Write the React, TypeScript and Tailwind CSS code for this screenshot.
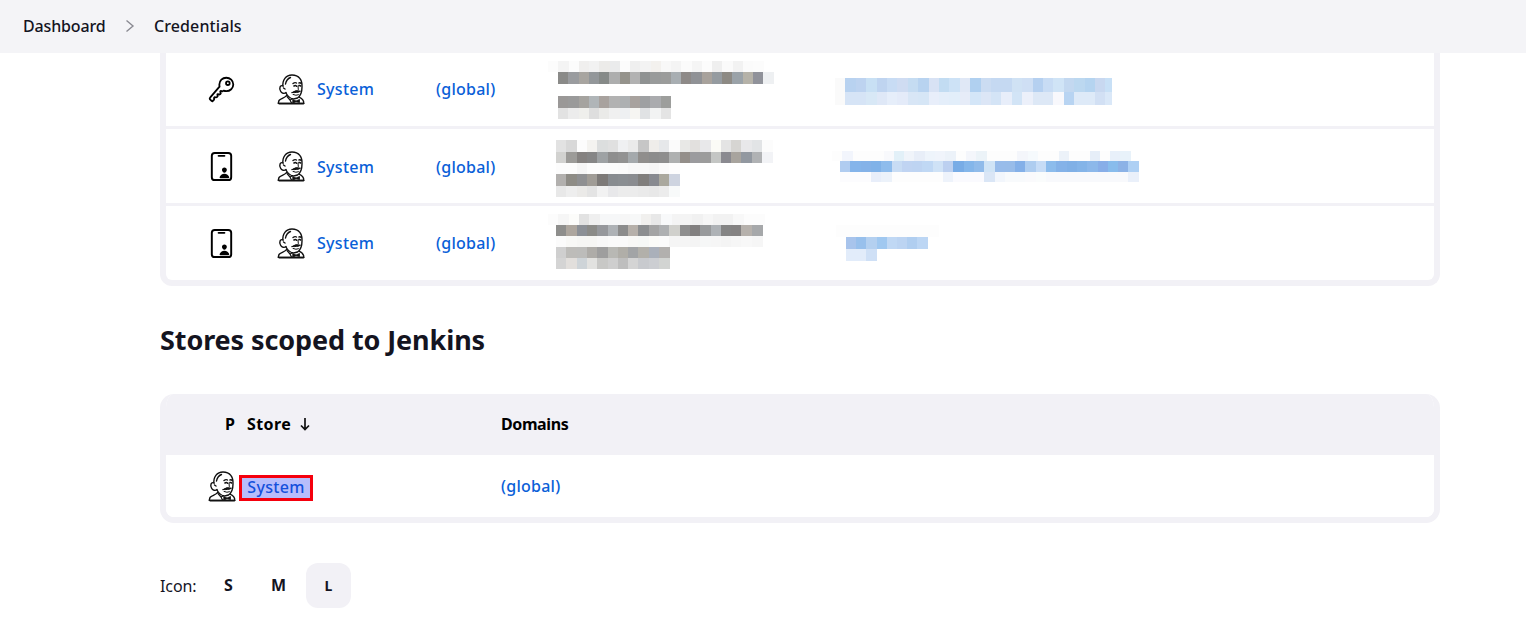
import type { ReactNode } from "react";
import { IoKeyOutline, IoIdCardOutline } from "react-icons/io5";

const font = { fontFamily: '"Noto Sans", sans-serif' };

type Band = { x: number; y: number; w: number; h: number; c: string[] };

function Mosaic({ width, height, bands }: { width: number; height: number; bands: Band[] }) {
  return (
    <svg width={width} height={height} viewBox={`0 0 ${width} ${height}`} shapeRendering="crispEdges" className="block shrink-0">
      {bands.map((b, i) =>
        b.c.map((c, j) => <rect key={`${i}-${j}`} x={b.x + j * b.w} y={b.y} width={b.w + 0.5} height={b.h} fill={c} />)
      )}
    </svg>
  );
}

function Jenkins() {
  return (
    <svg width="28" height="31" viewBox="0 0 28 31" fill="none" stroke="#111" strokeWidth="1.4" strokeLinecap="round" strokeLinejoin="round" className="shrink-0">
      <path d="M9.500 21.500C8 24 3.500 24.500 2 26.500L1.200 29.400H26.800C26.800 26.500 25.600 24.500 22 23.200" fill="#fff" />
      <path d="M6 13C5 6 9 1 15 1C22 1 25.500 6 25 13C25 18 23.500 22 20.500 24C17 25.500 12 25 9 19" fill="#fff" />
      <path d="M6 12C3 10.500 2 14.500 3.500 17C4.500 19.500 7.500 20 9 18.500" fill="#fff" />
      <path d="M8.500 10C9 7 11 4.500 13.500 3.500M6.500 14l1.500 1" />
      <path d="M16 9.500q2-1.500 3.500-.5M22 9q1.500-.5 2.200 .5" />
      <path d="M17 12q1.500-1 2.600 .2M22 11.600q1-.4 1.600 .4" strokeWidth="1.600" />
      <path d="M21 12l.3 3.500" strokeWidth="1" />
      <path d="M15 18.500q3.500-3 8.500-1.300q-2 1.300-4 1.200q-2 .4-4.500 .1z" fill="#111" strokeWidth="1" />
      <path d="M16 20.500q3 1.500 5.500 .3" strokeWidth="1" />
      <path d="M10 22.500L13 26L15.500 24.800M13 26L14.500 29" strokeWidth="1.200" />
      <path d="M16 25.500l3 1.500l3.500-1.500v3l-3.500-.8l-3 1.300z" fill="#111" strokeWidth="0.8" />
      <path d="M2 29.600H26.600" strokeWidth="1.600" />
    </svg>
  );
}

function Row({ icon, name, desc, last, h }: { icon: ReactNode; name: ReactNode; desc: ReactNode; last?: boolean; h: string }) {
  return (
    <div className={`flex items-center ${h} ${last ? "" : "border-b-[3px] border-[#f2f1f6]"}`}>
      <div className="w-[110px] flex justify-center text-black">{icon}</div>
      <div className="w-[40px] ml-[1px]"><Jenkins /></div>
      <a className="w-[119px] text-[#0960d8] font-medium tracking-[0.3px]">System</a>
      <a className="w-[112px] text-[#0960d8] font-medium tracking-[0.25px]">(global)</a>
      <div className="w-[284px]">{name}</div>
      <div>{desc}</div>
    </div>
  );
}

export default function App() {
  return (
    <div style={font} className="h-[623px] w-full overflow-hidden bg-white text-[16px] text-[#14141f]">
      <header className="h-[53px] flex items-center pl-[23px] pb-[2px] bg-[#f4f4f7] font-medium">
        <span className="w-[102px] tracking-[-0.15px]">Dashboard</span>
        <svg width="10" height="14" viewBox="0 0 10 14" fill="none" stroke="#8a8a92" strokeWidth="1.400" className="mr-[19px]"><path d="M1.500 1.500L8 7L1.500 12.500" /></svg>
        <span className="tracking-[0.1px]">Credentials</span>
      </header>

      <main className="pl-[160px] pr-[86px]">
        <section className="border-x-[6px] border-b-[6px] border-[#f2f1f6] rounded-b-[12px] bg-white">
          <Row
            h="h-[76px] pb-[1px]"
            icon={<IoKeyOutline size={29} />}
            name={
              <Mosaic width={232} height={60} bands={[
                { x: 0, y: 2, w: 10.25, h: 11, c: ["#fcfcfc","#f4f4f4","#fcfcfc","#f0efee","#f2f2f2","#ecebe9","#eaebec","#fcfcfc","#efefef","#f3f3f3","#f3f1ee","#f8f8f8","#f4f4f4","#fbfbfb","#f5f5f5","#fcfcfc","#efefef","#fafafa","#f2f2f2","#fbfbfb","#fcfcfc"] },
                { x: 10, y: 13, w: 10.25, h: 12, c: ["#8a8a88","#9a9c9f","#a8a5a0","#93979a","#868a88","#adaeae","#95938c","#b2b2b2","#8f9292","#999b9b","#9b9c9b","#a8aeb2","#8e8a88","#909296","#a8a29c","#959ba0","#8d8a84","#9aa2a8","#b5b2a8","#90929a","#eef0f2"] },
                { x: 10, y: 37, w: 10.25, h: 12, c: ["#9a9897","#9a9a9a","#a5a39f","#b0b5b8","#a8a29e","#b2b2b2","#adb0b2","#a8a29e","#9ea0a2","#aaabae","#9d9e9c"] },
                { x: 10, y: 49, w: 10.25, h: 11, c: ["#e2e2e2","#ececec","#efefec","#dedede","#eaeae8","#f0f0f0","#eef0f2","#f6f5f2","#e0e2e4","#f2f3f3","#e4e4e4"] },
              ]} />
            }
            desc={
              <Mosaic width={280} height={32} bands={[
                { x: 3, y: 4.5, w: 10.4, h: 14, c: ["#fafafa","#b8d2f0","#bdd3f0","#c8e0f4","#bfd4f0","#c8dcf4","#cfdcf2","#c5dcf2","#b8d3f0","#d8e2f4","#c2dcf2","#cde2f6","#e0e8f6","#b0d0f0","#cbdcf2","#c5d9f2","#c5d9f2","#d0e2f4","#cfdff4","#b5d0f0","#c8dcf4","#d0e4f6","#c3d8f0","#bcd8f0","#b5d4f0","#c8d8f0","#c8e0f6"] },
                { x: 3, y: 18.5, w: 10.4, h: 13, c: ["#fafafa","#d6e4f6","#d6e4f6","#d8e8f6","#dfe8f7","#e6eefa","#e4ebf9","#d8e6f6","#d6e6f6","#e8eefa","#e4eefa","#e2eefa","#e6ecf8","#d4e6f8","#dce6f6","#d4e4f6","#e8eefa","#d2e4f6","#ecf0fa","#dde8f6","#dde8f6","#f8f8fc","#b8d4f2","#deeaf8","#deeaf8","#d2e0f4","#dae8f8"] },
              ]} />
            }
          />
          <Row
            h="h-[77px] pt-[1px]"
            icon={<IoIdCardOutline size={31} />}
            name={
              <Mosaic width={232} height={60} bands={[
                { x: 8, y: 2.500, w: 10.3, h: 12, c: ["#e2e2e2","#d8d8d8","#fcfcfc","#f4f3f0","#dcdede","#e0e0e0","#eff0f2","#eaeaea","#c6c6c6","#efedea","#e6e8ea","#fbfbfb","#e8e8e6","#e2e0de","#e8e8ea","#fbfbf6","#e4e4e4","#d6d5d2","#e8e8ea","#e2e4e6","#fcfcfc"] },
                { x: 8, y: 14.500, w: 10.3, h: 11, c: ["#d2d2d0","#9c9b98","#858280","#868686","#9ea2a4","#8e8e8e","#929292","#a4a9ac","#908e8c","#8c8c8c","#8e8e8e","#aeb0b0","#948f8a","#9b9b9e","#9c9c9c","#c4c6c4","#8a8a90","#a8a49e","#9298a0","#b0b2b4","#f2f3f6"] },
                { x: 8, y: 25.500, w: 10.3, h: 11, c: ["#fcfcfc","#fcfcfc","#f6f6f6","#fcfcfc","#fcfcfc","#fcfcfc","#fbfbfb","#f8f8f8","#f8f8f8","#f6f6f6","#fafafa","#fdfdfd"] },
                { x: 8, y: 36.500, w: 10.3, h: 12, c: ["#b2b0ae","#8e8c86","#8f9092","#a09c96","#7d7a78","#888c90","#8a8e92","#8a8c90","#807e7c","#888a90","#aaa89e","#ced4e0"] },
                { x: 8, y: 48.500, w: 10.3, h: 11, c: ["#e8e8e8","#eeeeee","#ebeae8","#e4e4e4","#f2f2f2","#e8e8ea","#ececec","#ececec","#eaeaea","#e8e8e8","#ececec","#f8fafa"] },
              ]} />
            }
            desc={
              <Mosaic width={310} height={34} bands={[
                { x: 0, y: 0.500, w: 10.3, h: 10, c: ["#fdfdfd","#f2f5fc","#fdfdfd","#fdfdfd","#fdfdfd","#f8f9fc","#e2f0f8","#f0f4fa","#e8eef8","#eef4fb","#f0f4fb","#ecf2f9","#fdfdfd","#f4f6fb","#ecf3f8","#fdfdfd","#fdfdfd","#fdfdfd","#f4f6fb","#f6fafd","#fdfdfd","#fdfdfd","#ecf2f9","#fdfdfd","#fdfdfd","#e6eef8","#fdfdfd","#e8f0fa","#e8f2fa"] },
                { x: 8, y: 10.500, w: 10.3, h: 11, c: ["#b0ccf0","#84b4ea","#84b2e8","#80b2e8","#8ebcec","#c8dcf4","#c0d4f2","#bed4f2","#c0d8f4","#cfe2f6","#bcd0f0","#78ace6","#84b6ea","#90bbea","#d0e4f6","#98bcea","#98bce9","#84b0e8","#aecdf0","#c6dcf6","#8cbcec","#84b2e8","#80b0e6","#84b4e8","#8cb8ea","#88aee8","#88bcec","#8cb2e6","#aed0f4"] },
                { x: 8, y: 21.500, w: 10.3, h: 10, c: ["#fcfcfe","#fcfcfe","#fcfcfe","#e8eefa","#ecf2fa","#fdfdfd","#fdfdfd","#fdfdfd","#fdfdfd","#fdfdfd","#eef3fb","#fafafe","#fafafe","#fafafe","#dae6f6","#f2f6fc","#f8fafc","#f8fafc","#fafafc","#fafcfc","#f8f9fc","#f8f9fc","#f8f9fc","#f8f9fc","#f8f9fc","#f8f9fc","#f8f9fc","#f8f9fc","#eaf0fa"] },
              ]} />
            }
          />
          <Row
            h="h-[74px]"
            last
            icon={<IoIdCardOutline size={31} />}
            name={
              <Mosaic width={232} height={60} bands={[
                { x: 0, y: 1, w: 10.3, h: 11, c: ["#fcfcfc","#f6f6f6","#fcfcfa","#e2e2e2","#efefef","#f6f7f8","#f6f7f8","#f6f6f6","#f7f8f8","#f1f0ee","#e8e8e8","#f8f9fa","#f4f4f4","#f4f4f4","#f1f1f1","#f6f6f6","#f2f2f2","#f2f2f2","#f8f8f8","#fcfcfc","#fcfcfc"] },
                { x: 8, y: 12, w: 10.3, h: 11, c: ["#8e8e8c","#ada69e","#8c9096","#8b8b88","#96989c","#aeb2b6","#8c8c8c","#b6b0aa","#8c8e90","#a4a4a4","#aeb0b2","#d0d0cc","#8e8e8e","#828080","#989a9c","#aeb2b6","#848484","#848282","#b6b1ac","#a6a8aa"] },
                { x: 8, y: 23, w: 10.3, h: 11, c: ["#fbfbfb","#f8f8f6","#f6f6f4","#f6f6f4","#f8f8f8","#fafafa","#fafafa","#f8f8f6","#f6f8f6","#fbfbf8","#fbfbfb","#f5f5f5","#f5f5f5","#f4f4f4","#f6f7f7","#f6f6f6","#f4f4f4","#f6f6f6","#f8f8f8","#f6f6f6"] },
                { x: 8, y: 34, w: 10.3, h: 11, c: ["#cfcfcf","#bdbcb9","#bcbcba","#aeaca8","#9e9e9e","#b8b8b4","#b0aea8","#a2a4a6","#b2b0aa","#aab0ba","#b2b0ae"] },
                { x: 8, y: 45, w: 10.3, h: 11, c: ["#d4d4d4","#e2dfdc","#ced4d8","#e2e2e0","#c8c8c6","#cecece","#bebebe","#d4d4d4","#c8cace","#ccced2","#d2d4d2"] },
              ]} />
            }
            desc={
              <Mosaic width={110} height={36} bands={[
                { x: 4, y: 0, w: 10.2, h: 12, c: ["#fdfdfd","#fdfdfd","#fdfdfd","#fdfdfd","#fdfdfd","#fdfdfd","#fdfdfd","#fdfdfd","#fdfdfd","#fdfdfd"] },
                { x: 14, y: 12, w: 10.2, h: 12, c: ["#a8c4ec","#98c0ec","#b4d0f0","#a0c8f0","#c0d8f4","#bcd4f2","#b0cef0","#bcd6f4"] },
                { x: 14, y: 24, w: 10.2, h: 12, c: ["#e2ecfa","#e2ecfa","#cfe0f6"] },
              ]} />
            }
          />
        </section>

        <h2 className="mt-[36px] mb-[36px] text-[27px] leading-[36px] font-bold tracking-[-0.1px]">Stores scoped to Jenkins</h2>

        <section className="border-x-[6px] border-b-[6px] border-[#f2f1f6] rounded-[14px] overflow-hidden">
          <div className="flex items-center h-[61px] -mx-[6px] pb-[2px] bg-[#f2f1f6] font-bold text-black text-[16px]">
            <span className="ml-[65px] w-[22px]">P</span>
            <span className="w-[53px] tracking-[0.4px]">Store</span>
            <svg width="10" height="14" viewBox="0 0 10 14" fill="none" stroke="#111" strokeWidth="1.700" className="mt-[1px]"><path d="M5 1v11.500M1 8.500l4 4l4-4" /></svg>
            <span className="ml-[191px] tracking-[-0.4px]">Domains</span>
          </div>
          <div className="flex items-center h-[62px] bg-white">
            <div className="ml-[42px] w-[31px]"><Jenkins /></div>
            <a className="w-[74px] h-[26px] mt-[4px] pb-[3px] border-[3px] border-[#f5000d] bg-[#b8bdfb] text-[#1450dc] font-medium tracking-[0.3px] flex items-center justify-center">System</a>
            <a className="ml-[188px] text-[#0960d8] font-medium tracking-[0.25px]">(global)</a>
          </div>
        </section>

        <div className="flex items-center mt-[40px]">
          <span className="w-[46px] tracking-[-0.1px]">Icon:</span>
          <span className="w-[45px] text-center font-bold text-[16px] -mt-[2px]">S</span>
          <span className="w-[55px] text-center font-bold text-[16px] -mt-[2px]">M</span>
          <span className="w-[45px] h-[45px] rounded-[12px] bg-[#f2f1f6] flex items-center justify-center font-bold text-[14px]">L</span>
        </div>
      </main>
    </div>
  );
}
